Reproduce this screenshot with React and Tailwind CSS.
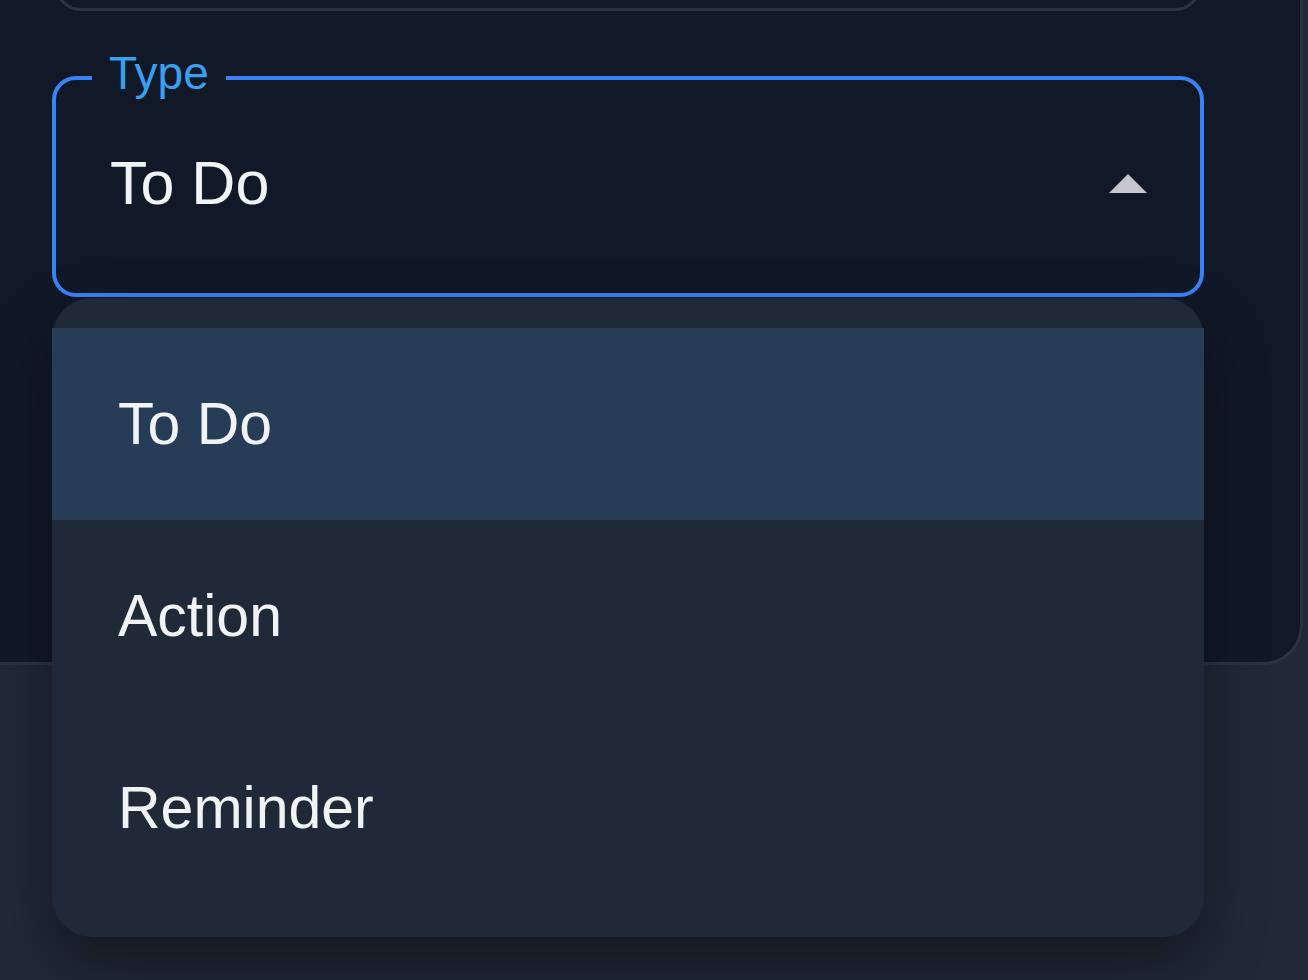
import React from 'react';

const options = ['To Do', 'Action', 'Reminder'];

const ArrowUp = () => (
  <svg width="38" height="19" viewBox="7 9 10 5" className="block">
    <path d="M7 14l5-5 5 5z" fill="#c5c7cc" />
  </svg>
);

export default function App() {
  const selected = 'To Do';

  return (
    <div className="relative min-h-[980px] w-full overflow-hidden bg-[#202937] font-['Liberation_Sans',Arial,sans-serif]">
      <div className="flex h-[665px] w-[1303px] flex-col rounded-br-[40px] border-r-[3px] border-b-[3px] border-[#2b3342] bg-[#111827] pl-[52px] pr-[96px]">
        {/* previous field, mostly scrolled off */}
        <div className="mx-[4px] -mt-[62px] h-[73px] shrink-0 rounded-[24px] border-[3px] border-[#2b3240]" />

        <fieldset className="mt-[40px] h-[246px] shrink-0 rounded-[24px] border-4 border-[#3b82f6] p-0">
          <legend className="ml-[36px] px-[17px] pb-[8px] text-[46px] leading-[45px] text-[#3b9ff0]">Type</legend>
          <div className="flex h-[159px] items-center justify-between pl-[54px] pr-[53px]">
            <span className="text-[61px] leading-none text-[#f1f2f4]">To Do</span>
            <ArrowUp />
          </div>
        </fieldset>
      </div>

      {/* open menu */}
      <div className="absolute left-[52px] top-[298px] w-[1152px] rounded-[40px] bg-[#1f2937] pt-[30px] pb-[33px] shadow-[0_28px_60px_rgba(0,0,0,0.4)]">
        {options.map((opt) => (
          <div
            key={opt}
            className={
              'flex h-[192px] items-center pl-[66px] text-[59px] leading-none text-[#f1f2f4] ' +
              (opt === selected ? 'bg-[#263c57]' : '')
            }
          >
            {opt}
          </div>
        ))}
      </div>
    </div>
  );
}
